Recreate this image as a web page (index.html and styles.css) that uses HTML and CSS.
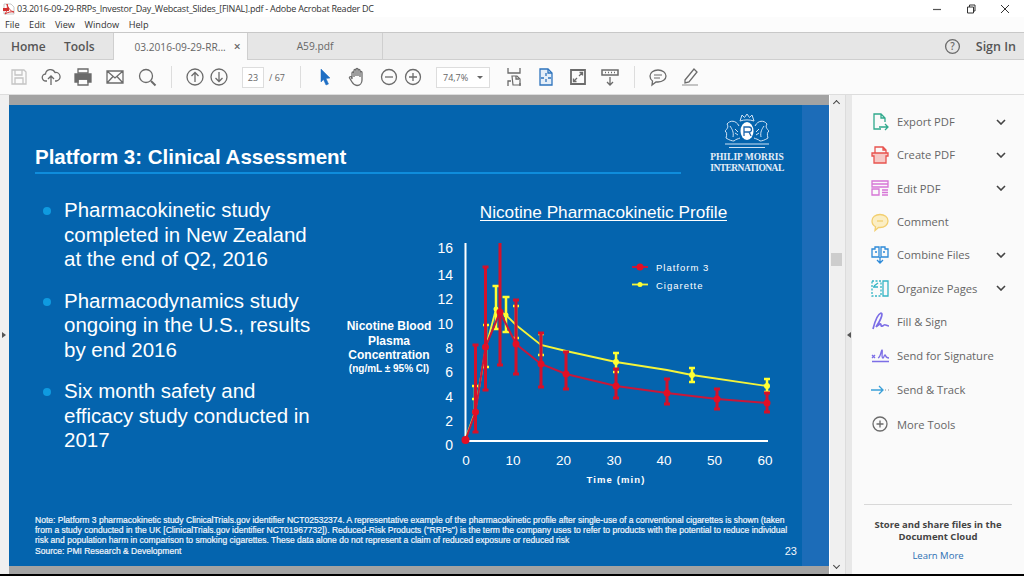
FILE: index.html
```html
<!DOCTYPE html>
<html lang="en">
<head>
    <meta charset="UTF-8">
    <meta name="viewport" content="width=device-width, initial-scale=1.0">
    <title>Adobe Acrobat Reader DC</title>
    <link rel="stylesheet" href="styles.css">
</head>
<body>

<div class="window">
    <!-- Title bar -->
    <div class="titlebar">
        <svg class="app-icon" viewBox="0 0 12 12"><path d="M1 1h7l3 3v7H1z" fill="#fff" stroke="#c9c9c9"/><path d="M0 5h6v3H0z" fill="#d3302f"/><path d="M4 1c1 4 3 7 7 8-3-.5-6 0-9 2 2-3 3-6 2-10z" fill="none" stroke="#d3302f"/></svg>
        <span class="title-text">03.2016-09-29-RRPs_Investor_Day_Webcast_Slides_[FINAL].pdf - Adobe Acrobat Reader DC</span>
        <div class="win-controls">
            <svg viewBox="0 0 12 12"><path d="M2 6.500h8" stroke="#555" stroke-width="1.200"/></svg>
            <svg viewBox="0 0 12 12"><path d="M2.500 4h6v6h-6zM4.500 4V2h5.500v6H8.500" fill="none" stroke="#333"/></svg>
            <svg viewBox="0 0 12 12"><path d="M2 2l8 8M10 2l-8 8" stroke="#333"/></svg>
        </div>
    </div>

    <!-- Menu -->
    <div class="menubar">
        <span>File</span><span>Edit</span><span>View</span><span>Window</span><span>Help</span>
    </div>

    <!-- Tabs -->
    <div class="tabbar">
        <span class="nav-tab home">Home</span>
        <span class="nav-tab tools">Tools</span>
        <div class="doc-tab active"><span>03.2016-09-29-RR...</span><b class="tab-close">&times;</b></div>
        <div class="doc-tab"><span>A59.pdf</span></div>
        <div class="tab-right">
            <svg class="help-icon" viewBox="0 0 18 18"><circle cx="9" cy="9" r="7.300" fill="none" stroke="#6b6b6b" stroke-width="1.400"/><text x="9" y="12.800" class="help-mark">?</text></svg>
            <span class="sign-in">Sign In</span>
        </div>
    </div>

    <!-- Toolbar -->
    <div class="toolbar">
        <div class="btn"><svg viewBox="0 0 20 20" class="ico"><path d="M3 3h12l2 2v12H3zM6 3v5h7V3M6 17v-6h8v6" stroke="#c4c4c4"/></svg></div>
        <div class="btn"><svg viewBox="0 0 20 20" class="ico"><path d="M6 14H5a3.500 3.500 0 0 1-.5-7 5 5 0 0 1 9.500-1.500 4 4 0 0 1 1.500 8.500H14"/><path d="M10 18V9M7 12l3-3 3 3"/></svg></div>
        <div class="btn"><svg viewBox="0 0 20 20" class="ico"><path d="M5 6V2h10v4z"/><path d="M2 7h16v8h-3v-3H5v3H2z" fill="#6b6b6b"/><path d="M5 12h10v6H5z"/></svg></div>
        <div class="btn"><svg viewBox="0 0 20 20" class="ico"><path d="M2 4h16v12H2zM2 4l8 7 8-7M2 16l6-6.500M18 16l-6-6.500"/></svg></div>
        <div class="btn"><svg viewBox="0 0 20 20" class="ico"><circle cx="9" cy="9" r="6.500"/><path d="M14 14l4.500 4.500" stroke-width="2"/></svg></div>
        <div class="sep"></div>
        <div class="btn narrow first"><svg viewBox="0 0 20 20" class="ico"><circle cx="10" cy="10" r="8"/><path d="M10 15V5.500M6.500 9L10 5.500 13.500 9"/></svg></div>
        <div class="btn narrow"><svg viewBox="0 0 20 20" class="ico"><circle cx="10" cy="10" r="8"/><path d="M10 5v9.500M6.500 11l3.500 3.500 3.500-3.500"/></svg></div>
        <div class="page-input">23</div>
        <span class="page-total">/ 67</span>
        <div class="sep second"></div>
        <div class="btn"><svg viewBox="0 0 20 20" class="ico"><path d="M6 2l9 9-4 .5 2.500 5.500-2.500 1-2.500-5.500L6 15z" fill="#1f6fc4" stroke="#1f6fc4" stroke-width=".5"/></svg></div>
        <div class="btn"><svg viewBox="0 0 20 20" class="ico"><path d="M5 12V6a1 1 0 0 1 2 0v4V3.500a1 1 0 0 1 2 0V9V2.500a1 1 0 0 1 2 0V9V3.500a1 1 0 0 1 2 0V10V5.500a1 1 0 0 1 2 0V13c0 3-2 5.500-5 5.500-2.500 0-3.500-1-5-3.500l-2.500-4c-.5-1 1-2 2-1z"/></svg></div>
        <div class="btn narrow zoom-out"><svg viewBox="0 0 20 20" class="ico"><circle cx="10" cy="10" r="7.500"/><path d="M6 10h8"/></svg></div>
        <div class="btn narrow"><svg viewBox="0 0 20 20" class="ico"><circle cx="10" cy="10" r="7.500"/><path d="M6 10h8M10 6v8"/></svg></div>
        <div class="zoom-select"><span>74,7%</span><i class="caret"></i></div>
        <div class="btn tool-first"><svg viewBox="0 0 20 20" class="ico"><path d="M4 1v5h12V1M4 19v-5h3M16 19v-3"/><path d="M8 9h5l3 3v6H9z" stroke-width="1.200"/><path d="M12 9v3h3"/></svg></div>
        <div class="btn"><svg viewBox="0 0 20 20" class="ico"><path d="M4 2h8l4 4v12H4z" stroke="#2e74bd" fill="#e4eef8"/><path d="M12 2v4h4M10 6v3M10 15v-3M5 11h3M15 11h-3" stroke="#2e74bd"/></svg></div>
        <div class="btn"><svg viewBox="0 0 20 20" class="ico"><path d="M3 3h14v14H3z" stroke-width="1.800"/><path d="M11 9l3.500-3.500M11.500 5.500h3v3M9 11l-3.500 3.500M8.500 14.500h-3v-3"/></svg></div>
        <div class="btn"><svg viewBox="0 0 20 20" class="ico"><path d="M2 3h16v5H2z" stroke-width="1.500"/><path d="M5 5.500h1M8 5.500h1M11 5.500h1M14 5.500h1"/><path d="M10 10v8M7 15l3 3 3-3"/></svg></div>
        <div class="sep third"></div>
        <div class="btn"><svg viewBox="0 0 20 20" class="ico"><path d="M10 3c4.500 0 8 2.500 8 6s-3.500 6-8 6H8l-4 3 .5-4C3 13 2 11 2 9c0-3.500 3.500-6 8-6z"/><path d="M6 8h8M6 11h6" stroke="#9a9a9a"/></svg></div>
        <div class="btn"><svg viewBox="0 0 20 20" class="ico"><path d="M5 13L14 2l3 3-8 10-4 1z"/><path d="M2 18h16" stroke="#c4c4c4" stroke-width="2"/></svg></div>
    </div>

    <div class="main">
        <div class="rail"><i class="rail-arrow"></i></div>

        <!-- Document view -->
        <div class="viewer">
            <div class="slide">
                <div class="slide-content">
                    <div class="slide-head">
                        <h1>Platform 3: Clinical Assessment</h1>
                        <div class="logo">
                            <svg class="crest" viewBox="0 0 46 36">
                                <g fill="none" stroke="#cfe2f4" stroke-width="1">
                                    <path d="M16 8l2-6 2.500 2.500L23 1l2.500 3.500L28 2l2 6c-4-1.500-10-1.500-14 0z"/>
                                    <path d="M15 13c-3-6-9-6-12-2 2 3 0 5-2 7 2 1 2 4 1 7 3 2 6 3 8 3 2-2 4-2 6-3"/>
                                    <path d="M31 13c3-6 9-6 12-2-2 3 0 5 2 7-2 1-2 4-1 7-3 2-6 3-8 3-2-2-4-2-6-3"/>
                                    <path d="M6 13c2 3 4 6 3 11M40 13c-2 3-4 6-3 11M11 16l3 3M11 20l3 2M35 16l-3 3M35 20l-3 2M1 31h44M5 34.500h36"/>
                                </g>
                                <ellipse cx="23" cy="18" rx="6.500" ry="9" fill="#fff"/>
                                <path d="M20 23v-9h5a2.500 2.500 0 0 1 0 5h-5M25 19l2 4" fill="none" stroke="#1d66ad" stroke-width="1.300"/>
                            </svg>
                            <span>PHILIP MORRIS</span>
                            <span class="logo-tight">INTERNATIONAL</span>
                        </div>
                    </div>

                    <div class="slide-body">
                        <ul class="bullets">
                            <li>Pharmacokinetic study completed in New Zealand at the end of Q2, 2016</li>
                            <li>Pharmacodynamics study ongoing in the U.S., results by end 2016</li>
                            <li>Six month safety and efficacy study conducted in 2017</li>
                        </ul>

                        <!-- viewBox uses the window's own coordinates, easier to read off the chart -->
                        <svg class="chart" viewBox="335 195 455 295">
                            <text x="603.500" y="218" class="chart-title">Nicotine Pharmacokinetic Profile</text>
                            <path d="M480 220.500h247" class="title-rule"/>

                            <text x="389" y="330" class="y-title">Nicotine Blood</text>
                            <text x="389" y="344.500" class="y-title">Plasma</text>
                            <text x="389" y="358.500" class="y-title">Concentration</text>
                            <text x="389" y="372" class="y-unit">(ng/mL &#177; 95% CI)</text>

                            <text x="453" y="253" class="tick-y">16</text>
                            <text x="453" y="280" class="tick-y">14</text>
                            <text x="453" y="304" class="tick-y">12</text>
                            <text x="453" y="329" class="tick-y">10</text>
                            <text x="453" y="353" class="tick-y">8</text>
                            <text x="453" y="377" class="tick-y">6</text>
                            <text x="453" y="402" class="tick-y">4</text>
                            <text x="453" y="426" class="tick-y">2</text>
                            <text x="453" y="450" class="tick-y">0</text>

                            <text x="466" y="465" class="tick-x">0</text>
                            <text x="513" y="465" class="tick-x">10</text>
                            <text x="563.500" y="465" class="tick-x">20</text>
                            <text x="614" y="465" class="tick-x">30</text>
                            <text x="664" y="465" class="tick-x">40</text>
                            <text x="714.500" y="465" class="tick-x">50</text>
                            <text x="765" y="465" class="tick-x">60</text>
                            <text x="616" y="483" class="x-title">Time (min)</text>

                            <path d="M465.500 243v198H768" class="axis"/>

                            <!-- cigarette -->
                            <polyline class="line-yellow" points="465,440 475,412 486,347 496,309 506,315 516,325 541,345 566,351 616,362 667,370 692,375 767,386"/>
                            <path class="bar-yellow" d="M475 386V412M486 325V367M496 286V329M506 297V332M516 306V338M541 334V355M616 353V372M692 368V382M767 379V392"/>
                            <path class="cap-yellow" d="M472 386h6M472 399h6M472 412h6M483 325h6M483 367h6M492.500 286h7M492.500 329h7M502.500 297h7M502.500 332h7M513 306h6M513 338h6M538 334h6M538 355h6M613 353h6M613 372h6M689 368h6M689 382h6M764 379h6M764 392h6"/>
                            <g class="dot-yellow">
                                <circle cx="496" cy="309" r="2.500"/><circle cx="506" cy="315" r="2.500"/><circle cx="616" cy="362" r="3"/><circle cx="692" cy="375" r="3"/><circle cx="767" cy="386" r="3"/>
                            </g>

                            <!-- platform 3 -->
                            <polyline class="line-red" points="465.500,440 475.500,412 485.500,347 500,312 516,344 541,364 566,374 616,386 667,393 717,399 767,403"/>
                            <path class="bar-red" d="M475.500 345V432M485.500 267V390M500 243V365M516 300V374M541 333V387M566 352V389M616 369V398M667 379V404M717 389V409M767 393V412"/>
                            <path class="cap-red" d="M472.500 345h6M472.500 432h6M482.500 267h6M482.500 390h6M497 365h6M513 300h6M513 374h6M538 333h6M538 387h6M563 352h6M563 389h6M613 369h6M613 398h6M664 379h6M664 404h6M714 389h6M714 409h6M764 393h6M764 412h6"/>
                            <g class="dot-red">
                                <circle cx="465.500" cy="440" r="4"/><circle cx="475.500" cy="412" r="3.500"/><circle cx="485.500" cy="347" r="3.500"/><circle cx="500" cy="312" r="3.500"/><circle cx="516" cy="344" r="3.500"/><circle cx="541" cy="364" r="3.500"/><circle cx="566" cy="374" r="3.500"/><circle cx="616" cy="386" r="3.500"/><circle cx="667" cy="393" r="3.500"/><circle cx="717" cy="399" r="3.500"/><circle cx="767" cy="403" r="3.500"/>
                            </g>

                            <!-- legend -->
                            <path d="M632 267h16" class="line-red"/><circle cx="640" cy="267" r="3.500" class="legend-red"/>
                            <text x="656" y="271" class="legend-text">Platform 3</text>
                            <path d="M632 284.500h16" class="line-yellow"/><circle cx="640" cy="284.500" r="2.500" class="legend-yellow"/>
                            <text x="656" y="289" class="legend-text">Cigarette</text>
                        </svg>
                    </div>

                    <div class="note">
                        Note: Platform 3 pharmacokinetic study ClinicalTrials.gov identifier NCT02532374. A representative example of the pharmacokinetic profile after single-use of a conventional cigarettes is shown (taken<br>
                        from a study conducted in the UK [ClinicalTrials.gov identifier NCT01967732]). Reduced-Risk Products ("RRPs") is the term the company uses to refer to products with the potential to reduce individual<br>
                        risk and population harm in comparison to smoking cigarettes. These data alone do not represent a claim of reduced exposure or reduced risk
                        <div class="note-last"><span>Source: PMI Research &amp; Development</span><span class="page-no">23</span></div>
                    </div>
                </div>
                <div class="slide-band"></div>
            </div>
        </div>

        <div class="scrollbar">
            <i class="arrow-up"></i>
            <div class="thumb"></div>
            <i class="arrow-down"></i>
        </div>
        <div class="splitter"><i class="split-arrow"></i></div>

        <!-- Tools pane -->
        <div class="panel">
            <div class="tool-row">
                <svg viewBox="0 0 20 20" class="tool-ico green"><path d="M11 17H4V2h7l4 4v4M11 2v4h4"/><path d="M9 15h9M15 12l3 3-3 3"/></svg>
                <span>Export PDF</span><svg class="chev" viewBox="0 0 10 6"><path d="M1 1l4 4 4-4"/></svg>
            </div>
            <div class="tool-row">
                <svg viewBox="0 0 20 20" class="tool-ico red"><path d="M5 8V2h8l3 3v3M13 2v3h3"/><path d="M2 8h16v3h-2v7H4v-7H2z" fill="#f6c9c6"/></svg>
                <span>Create PDF</span><svg class="chev" viewBox="0 0 10 6"><path d="M1 1l4 4 4-4"/></svg>
            </div>
            <div class="tool-row">
                <svg viewBox="0 0 20 20" class="tool-ico magenta"><path d="M2 3h16v6H2zM2 11h7v6H2zM12 12h6M12 14.500h6M12 17h6M2 6h16"/></svg>
                <span>Edit PDF</span><svg class="chev" viewBox="0 0 10 6"><path d="M1 1l4 4 4-4"/></svg>
            </div>
            <div class="tool-row">
                <svg viewBox="0 0 20 20" class="tool-ico yellow"><path d="M10 2.500c4.500 0 8 2.800 8 6.500s-3.500 6.500-8 6.500H8.500L5 18.500l.5-3.800C3.300 13.500 2 11.500 2 9c0-3.700 3.500-6.500 8-6.500z" fill="#fbeec4"/><path d="M7 9h6"/></svg>
                <span>Comment</span>
            </div>
            <div class="tool-row">
                <svg viewBox="0 0 20 20" class="tool-ico blue"><path d="M9 12H2V4h3V2h4zM11 12h7V4h-3V2h-4zM5 7h2M13 7h2M10 12v6M7 15l3 3 3-3"/></svg>
                <span>Combine Files</span><svg class="chev" viewBox="0 0 10 6"><path d="M1 1l4 4 4-4"/></svg>
            </div>
            <div class="tool-row">
                <svg viewBox="0 0 20 20" class="tool-ico teal"><path d="M2 3h9v15H2z" stroke-dasharray="2 1.500"/><path d="M13 3h5v15h-5zM3 9h5M8 5L4 8"/></svg>
                <span>Organize Pages</span><svg class="chev" viewBox="0 0 10 6"><path d="M1 1l4 4 4-4"/></svg>
            </div>
            <div class="tool-row">
                <svg viewBox="0 0 20 20" class="tool-ico purple thick"><path d="M3 18C5 10 8 3 11 2c2 0 1 5-5 14 3-3 5-4 5-2s2 1 3 0 3 1 5 1"/></svg>
                <span>Fill &amp; Sign</span>
            </div>
            <div class="tool-row tall">
                <svg viewBox="0 0 20 20" class="tool-ico purple"><path d="M2 10l3 3M5 10l-3 3M8 13c3-1 3-8 4-8s-1 8 1 8c1 0 1-3 2-3s0 3 4 3M2 16.500h17"/></svg>
                <span>Send for Signature</span>
            </div>
            <div class="tool-row tall">
                <svg viewBox="0 0 20 20" class="tool-ico sky"><path d="M1 10h12M9 6l4 4-4 4"/><path d="M15 10h1M18 10h1" stroke="#b5b5b5"/></svg>
                <span>Send &amp; Track</span>
            </div>
            <div class="tool-row tall">
                <svg viewBox="0 0 20 20" class="tool-ico gray"><circle cx="10" cy="10" r="7"/><path d="M6.500 10h7M10 6.500v7"/></svg>
                <span>More Tools</span>
            </div>

            <div class="panel-foot">
                <p>Store and share files in the<br>Document Cloud</p>
                <a>Learn More</a>
            </div>
        </div>
    </div>
</div>

</body>
</html>
```

FILE: styles.css
```css
/* Reader window */
html, body {
    margin: 0;
    height: 100%;
    overflow: hidden;
}

body {
    background-color: #000;
    font-family: "Open Sans", "Noto Sans", sans-serif;
    color: #444;
}

.window {
    display: flex;
    flex-direction: column;
    height: 574px;
    background-color: #fff;
}

/* Title bar */
.titlebar {
    display: flex;
    align-items: center;
    flex: 0 0 17px;
    padding-left: 3px;
    background-color: #fff;
    font-size: 9px;
    color: #333;
}

.app-icon {
    width: 12px;
    height: 12px;
    margin-right: 2px;
}

.title-text {
    white-space: nowrap;
    letter-spacing: -0.235px;
}

.win-controls {
    display: flex;
    margin-left: auto;
    margin-right: 13px;
    gap: 22px;
}

.win-controls svg {
    width: 12px;
    height: 12px;
}

/* Menu */
.menubar {
    display: flex;
    align-items: center;
    flex: 0 0 15px;
    padding-left: 5px;
    gap: 9.500px;
    background-color: #fcfcfc;
    font-size: 9.200px;
    color: #333;
}

/* Tabs */
.tabbar {
    display: flex;
    align-items: stretch;
    flex: 0 0 28px;
    box-sizing: border-box;
    background-color: #e6e6e6;
    border-top: 1px solid #c8c8c8;
    border-bottom: 1px solid #cfcfcf;
}

.nav-tab {
    align-self: center;
    box-sizing: border-box;
    font-size: 12px;
    font-weight: 600;
    color: #555;
}

.home {
    width: 64px;
    padding-left: 11px;
}

.tools {
    width: 49px;
}

.doc-tab {
    display: flex;
    align-items: center;
    justify-content: center;
    width: 135px;
    box-sizing: border-box;
    border-right: 1px solid #cfcfcf;
    font-size: 10.200px;
    color: #666;
}

.doc-tab.active {
    position: relative;
    background-color: #fbfbfb;
    border-left: 1px solid #cfcfcf;
    margin-bottom: -1px;
    padding-left: 14px;
    gap: 8px;
}

.tab-close {
    font-size: 12px;
    font-weight: 600;
    color: #666;
}

.tab-right {
    display: flex;
    align-items: center;
    margin-left: auto;
    margin-right: 8px;
}

.help-icon {
    width: 17px;
    height: 17px;
    margin-right: 15px;
}

.help-mark {
    font-size: 10.500px;
    font-weight: 600;
    text-anchor: middle;
    fill: #6b6b6b;
}

.sign-in {
    font-size: 12.500px;
    font-weight: 600;
    color: #555;
}

/* Toolbar */
.toolbar {
    display: flex;
    align-items: center;
    flex: 0 0 35px;
    box-sizing: border-box;
    padding-left: 3px;
    background-color: #fbfbfb;
    border-bottom: 1px solid #ddd;
}

.btn {
    display: flex;
    align-items: center;
    justify-content: center;
    width: 32px;
    height: 24px;
}

.btn.narrow {
    width: 24px;
}

.btn.first {
    margin-left: 11px;
}

.btn.zoom-out {
    margin-left: 4px;
}

.btn.tool-first {
    margin-left: 8px;
}

.ico {
    width: 20px;
    height: 20px;
    fill: none;
    stroke: #6b6b6b;
    stroke-width: 1.300;
}

.sep {
    width: 1px;
    height: 22px;
    margin-left: 8px;
    background-color: #ddd;
}

.sep.second {
    margin-left: 13px;
    margin-right: 8px;
}

.sep.third {
    margin-right: 7px;
}

.page-input {
    width: 22px;
    height: 21px;
    box-sizing: border-box;
    margin-left: 11px;
    border: 1px solid #ddd;
    background-color: #fff;
    font-size: 9px;
    line-height: 19px;
    text-align: center;
    color: #666;
}

.page-total {
    width: 18px;
    margin-left: 5px;
    font-size: 9px;
    white-space: nowrap;
    color: #666;
}

.zoom-select {
    display: flex;
    align-items: center;
    width: 54px;
    height: 21px;
    box-sizing: border-box;
    margin-left: 11px;
    padding-left: 6px;
    border: 1px solid #ddd;
    background-color: #fff;
    font-size: 9px;
    color: #666;
}

.caret {
    margin-left: auto;
    margin-right: 6px;
    border-left: 3px solid transparent;
    border-right: 3px solid transparent;
    border-top: 3px solid #666;
}

/* Main area */
.main {
    display: flex;
    flex: 1;
    min-height: 0;
}

.rail {
    display: flex;
    align-items: center;
    flex: 0 0 9px;
    background-color: #f0f0f0;
}

.rail-arrow {
    margin-left: 2px;
    border-top: 3px solid transparent;
    border-bottom: 3px solid transparent;
    border-left: 4px solid #555;
}

.viewer {
    display: flex;
    flex: 0 0 820px;
    box-sizing: border-box;
    padding: 10px 0 8px;
    background-color: #a3a3a3;
}

.slide {
    display: flex;
    flex: 1;
    background-color: #0464ae;
    color: #fff;
    font-family: "Liberation Sans", Arial, sans-serif;
}

.slide-content {
    display: flex;
    flex-direction: column;
    flex: 0 0 793px;
    box-sizing: border-box;
    padding-left: 26px;
}

.slide-band {
    flex: 1;
    background-color: #1c6cb8;
}

.slide-head {
    display: flex;
    align-items: flex-end;
    height: 69px;
}

.slide-head h1 {
    width: 646px;
    margin: 0;
    padding-bottom: 2px;
    border-bottom: 2px solid #0f8ddc;
    font-size: 20.500px;
    line-height: 26px;
    font-weight: bold;
}

.logo {
    display: flex;
    flex-direction: column;
    align-items: center;
    width: 76px;
    margin-left: 28px;
    margin-bottom: 1px;
    font-family: "Liberation Serif", serif;
    font-size: 9.500px;
    font-weight: bold;
    line-height: 10.500px;
    color: #e4eef8;
    white-space: nowrap;
}

.logo-tight {
    letter-spacing: -0.550px;
}

.crest {
    width: 46px;
    height: 36px;
    margin-bottom: 3px;
}

.slide-body {
    display: flex;
    flex: 1;
    min-height: 0;
}

.bullets {
    flex: 0 0 300px;
    box-sizing: border-box;
    margin: 0;
    padding: 24px 20px 0 29px;
    list-style: none;
    font-size: 20.500px;
    line-height: 24.500px;
    position: relative;
}

.bullets li {
    position: relative;
    margin-bottom: 17px;
}

.bullets li::before {
    content: "";
    position: absolute;
    left: -21px;
    top: 9px;
    width: 8px;
    height: 8px;
    border-radius: 50%;
    background-color: #0f9ae0;
}

.chart {
    width: 455px;
    height: 295px;
    margin-top: 21px;
    flex: none;
}

.chart text {
    fill: #fff;
}

.chart-title {
    font-size: 17.200px;
    text-anchor: middle;
}

.title-rule {
    stroke: #fff;
    stroke-width: 1;
}

.y-title {
    font-size: 12px;
    font-weight: bold;
    text-anchor: middle;
}

.y-unit {
    font-size: 10px;
    font-weight: bold;
    text-anchor: middle;
}

.tick-y {
    font-size: 14px;
    text-anchor: end;
}

.tick-x {
    font-size: 13.500px;
    text-anchor: middle;
}

.x-title {
    font-size: 9.500px;
    font-weight: bold;
    letter-spacing: 1.100px;
    text-anchor: middle;
}

.axis {
    fill: none;
    stroke: #fff;
    stroke-width: 2;
}

.line-yellow {
    fill: none;
    stroke: #f4f43a;
    stroke-width: 1.800;
}

.bar-yellow {
    fill: none;
    stroke: #ffff33;
    stroke-width: 2.500;
}

.cap-yellow {
    fill: none;
    stroke: #ffff33;
    stroke-width: 2.500;
}

.dot-yellow,
.legend-yellow {
    fill: #ffff33;
}

.line-red {
    fill: none;
    stroke: #c8183a;
    stroke-width: 2;
}

.bar-red {
    fill: none;
    stroke: #d3112b;
    stroke-width: 3;
}

.cap-red {
    fill: none;
    stroke: #d3112b;
    stroke-width: 3;
}

.dot-red,
.legend-red {
    fill: #e30f25;
}

.legend-text {
    font-size: 9.500px;
    letter-spacing: 1px;
}

.note {
    box-sizing: border-box;
    padding-right: 5px;
    padding-bottom: 10px;
    font-size: 8.520px;
    line-height: 10.300px;
    white-space: nowrap;
    color: #f2f6fb;
    -webkit-text-stroke: 0.2px #f2f6fb;
}

.note-last {
    display: flex;
    justify-content: space-between;
}

.page-no {
    font-size: 11px;
    -webkit-text-stroke: 0;
}

/* Scrollbar and splitter */
.scrollbar {
    position: relative;
    flex: 0 0 15px;
    margin-left: 1px;
    background-color: #f0f0f0;
}

.arrow-up,
.arrow-down {
    position: absolute;
    left: 4px;
    width: 4px;
    height: 4px;
    border-left: 1.500px solid #444;
    border-top: 1.500px solid #444;
}

.arrow-up {
    top: 6px;
    transform: rotate(45deg);
}

.arrow-down {
    bottom: 6px;
    transform: rotate(225deg);
}

.thumb {
    position: absolute;
    top: 158px;
    left: 1px;
    width: 11px;
    height: 13px;
    background-color: #cdcdcd;
}

.splitter {
    display: flex;
    align-items: center;
    flex: 0 0 7px;
    box-sizing: border-box;
    background-color: #e8e8e8;
    border-left: 1px solid #dcdcdc;
}

.split-arrow {
    margin-left: 1px;
    border-top: 3px solid transparent;
    border-bottom: 3px solid transparent;
    border-right: 4px solid #555;
}

/* Tools pane */
.panel {
    display: flex;
    flex-direction: column;
    flex: 1;
    box-sizing: border-box;
    padding-top: 10px;
    background-color: #fafafa;
}

.tool-row {
    display: flex;
    align-items: center;
    flex: 0 0 33.300px;
    padding-left: 18px;
    font-size: 11.200px;
    color: #666;
}

.tool-row.tall {
    flex-basis: 34.500px;
}

.tool-row span {
    margin-left: 7px;
}

.tool-ico {
    flex: none;
    width: 20px;
    height: 20px;
    fill: none;
    stroke-width: 1.300;
}

.tool-ico.thick {
    stroke-width: 1.700;
}

.green { stroke: #2fa98c; }
.red { stroke: #e8534e; }
.magenta { stroke: #d675d6; }
.yellow { stroke: #f2cf70; }
.blue { stroke: #2e8ad8; }
.teal { stroke: #35b5c5; }
.purple { stroke: #7c6ee6; }
.sky { stroke: #3aa0d8; }
.gray { stroke: #6b6b6b; }

.chev {
    width: 10px;
    height: 6px;
    margin-left: auto;
    margin-right: 18px;
    fill: none;
    stroke: #444;
    stroke-width: 1.600;
}

.panel-foot {
    margin: auto 12px 0;
    padding: 14px 0 12px;
    border-top: 1px solid #d8d8d8;
    text-align: center;
}

.panel-foot p {
    margin: 0 0 6px;
    font-size: 9.500px;
    font-weight: 700;
    line-height: 12px;
    color: #444;
}

.panel-foot a {
    display: block;
    font-size: 9.500px;
    line-height: 13px;
    color: #2d6fb3;
}
```
